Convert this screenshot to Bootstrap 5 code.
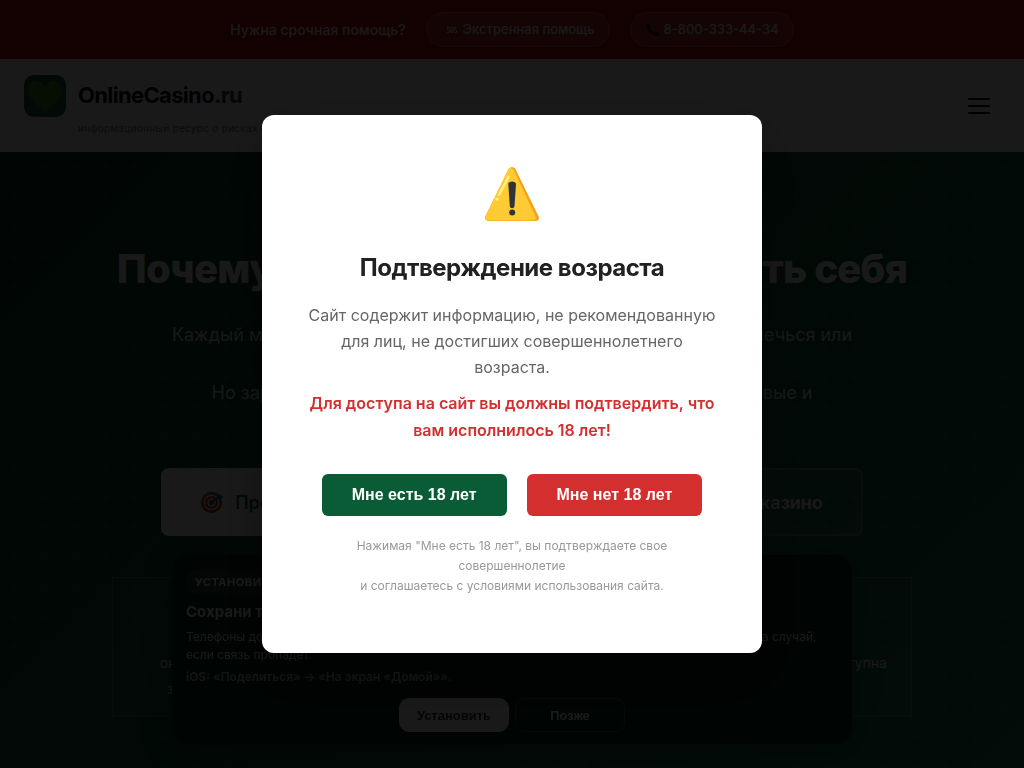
<!DOCTYPE html>
<html lang="ru">
<head>
<meta charset="utf-8">
<meta name="viewport" content="width=device-width, initial-scale=1">
<title>OnlineCasino.ru</title>
<link href="https://cdn.jsdelivr.net/npm/bootstrap@5.3.0/dist/css/bootstrap.min.css" rel="stylesheet">
<style>
body{font-family:Inter,"Noto Sans",sans-serif;color:#212121;background:#fff}
.sos-bar{background:#c00c0c;border-bottom:2px solid #b71c1c;padding:12px 16px 10px;gap:20px}
.sos-title{font-size:14px;line-height:20px;font-weight:500}
.sos-link{gap:4px;height:35px;padding:0 14px;border-radius:18px;font-size:13px;font-weight:500;color:#fff;background:rgba(255,255,255,.15);border:1px solid rgba(255,255,255,.2);text-decoration:none}
.site-head{padding:16px 24px;gap:12px;background:#fff}
.logo-box{width:42px;height:42px;border-radius:10px;background:linear-gradient(135deg,#0a5c36,#0d6b50)}
.brand-name{font-size:22px;line-height:40px;font-weight:700;letter-spacing:-.03em;color:#111}
.brand-name span{color:#0a5c46}
.brand-sub{font-size:10px;line-height:16px;padding-top:5px;letter-spacing:.03em;color:#777}
.burger{padding:10px;gap:5px;background:none;border:0}
.burger span{width:22px;height:2px;background:#000;border-radius:1px}
.hero{padding:92px 24px 0;min-height:0;color:#fff;background:url("data:image/svg+xml,%3Csvg xmlns='http://www.w3.org/2000/svg' width='30' height='30'%3E%3Cpath d='M15 11v8M11 15h8' stroke='white' stroke-opacity='.07'/%3E%3C/svg%3E"),linear-gradient(135deg,#0a4030,#0a5636 50%,#147a5c)}
.hero h1{font-size:40px;line-height:50px;font-weight:800;letter-spacing:-.02em;margin-bottom:26px}
.hero-lead{font-size:18px;line-height:29px;max-width:700px;margin-bottom:32px;opacity:.9}
.hero-btn{height:68px;padding:0 38px;border-radius:8px;border:2px solid #fff;font-size:18px;font-weight:600;text-decoration:none;white-space:nowrap}
.hero-main{background:#fff;color:#0a5c46;gap:12px}
.hero-alt{background:rgba(255,255,255,.1);border-color:rgba(255,255,255,.2);color:#fff}
.facts{max-width:800px;min-height:140px;margin-top:41px;padding:14px 24px;border:1px solid rgba(255,255,255,.2);background:rgba(255,255,255,.05);font-size:14px;line-height:26px}
.fact-last{padding-bottom:26px}
.install{bottom:24px;max-width:680px;width:calc(100% - 32px);padding:14px 14px 12px;border-radius:16px;background:#06281e;color:#fff;box-shadow:0 8px 30px rgba(0,0,0,.3);font-size:12px;line-height:18px}
.install-tag{padding:4px 9px;border-radius:13px;background:rgba(255,255,255,.1);font-size:11px;font-weight:700;letter-spacing:.05em}
.install h2{font-size:15px;line-height:20px;font-weight:700;margin:7px 0 6px}
.install-btn{width:110px;height:34px;border-radius:10px;font:bold 13px "Liberation Sans",sans-serif;border:1px solid #fff}
.install-yes{background:#fff;color:#0a3d2e}
.install-no{background:none;color:#fff;border-color:rgba(255,255,255,.25)}
.veil{background:rgba(0,0,0,.9);z-index:1050}
.age-box{max-width:500px;padding:40px;border-radius:12px;background:#fff;box-shadow:0 20px 60px rgba(0,0,0,.3)}
.age-icon{height:80px;margin-bottom:18px}
.age-box h2{font-size:24px;line-height:30px;font-weight:700;letter-spacing:-.02em;margin-bottom:19px}
.age-text{font-size:16px;line-height:26px;color:#666;margin-bottom:10px}
.age-strong{font-size:16px;line-height:27px;font-weight:600;color:#d32f2f;margin-bottom:30px}
.age-btn{height:42px;padding:0 30px;border:0;border-radius:6px;color:#fff;font:bold 16px "Liberation Sans",sans-serif}
.age-yes{background:#0a5c36}
.age-no{background:#d32f2f}
.age-note{font-size:12px;line-height:20px;color:#999;margin:20px 0 17px}
.gap-btn{gap:20px}
.gap-small{gap:6px}
</style>
</head>
<body class="vh-100 overflow-hidden d-flex flex-column">
<div class="sos-bar d-flex justify-content-center align-items-center text-white">
  <span class="sos-title">Нужна срочная помощь?</span>
  <a href="#sos" class="sos-link d-flex align-items-center">
    <svg class="ms-1" width="14" height="14" viewBox="0 0 16 16"><rect x="1" y="1" width="14" height="14" rx="2" fill="#d32020"/><g fill="none" stroke="#fff" stroke-width="1.3"><path d="M5.300 5.500C4.500 4.500 2.700 4.800 2.700 6.200C2.700 8 5.300 7.600 5.300 9.700C5.300 11.300 3.300 11.500 2.400 10.400"/><rect x="6.700" y="4.900" width="2.600" height="6.200" rx="1.300"/><path d="M13.300 5.500C12.500 4.500 10.700 4.800 10.700 6.200C10.700 8 13.300 7.600 13.300 9.700C13.300 11.300 11.300 11.500 10.400 10.400"/></g></svg>
    Экстренная помощь</a>
  <a href="tel:88003334434" class="sos-link d-flex align-items-center">
    <svg width="15" height="15" viewBox="0 0 16 16"><path fill="#111b1e" d="M1.500 3C1 1.500 3 0 4.200 1.200L6 4C6.500 5 5.700 5.700 4.900 6.400C5.700 8.500 7.500 10.300 9.600 11.200C10.400 10.200 11.200 9.700 12.200 10.300L14.800 12.100C16 13.200 14.500 15.200 13 15C7 14.500 1.800 9 1.500 3Z"/></svg>
    8-800-333-44-34</a>
</div>

<header class="site-head d-flex align-items-start">
  <div class="logo-box d-flex align-items-center justify-content-center">
    <svg width="36" height="36" viewBox="0 0 36 36"><path fill="#408018" d="M18 35C14 29 1 22 1 11C1 1 14 0 18 8C22 0 35 1 35 11C35 22 22 29 18 35Z"/><path fill="#60992c" d="M4 10C4 5 8 4 10 5C8 6 6 9 5 11ZM22 7C24 4 27 4 28 5C25 6 24 8 22 9Z"/></svg>
  </div>
  <div class="flex-grow-1">
    <div class="brand-name">OnlineCasino<span>.ru</span></div>
    <div class="brand-sub">информационный ресурс о рисках и зависимости</div>
  </div>
  <button class="burger d-flex flex-column align-self-center" aria-label="Меню"><span></span><span></span><span></span></button>
</header>

<main class="hero text-center flex-grow-1 overflow-hidden">
  <h1>Почему нужно вовремя защищать себя</h1>
  <p class="hero-lead mx-auto">Каждый может неожиданно столкнуться с азартными играми, увлечься или<br>потерять контроль над собой.<br>Но заранее зная все эти риски, можно сберечь свои силы, новые и<br>старые мечты.</p>
  <div class="d-flex justify-content-center gap-3">
    <a href="#test" class="hero-btn hero-main d-flex align-items-center">
      <svg width="22" height="22" viewBox="0 0 22 22"><circle cx="10.500" cy="11.500" r="10.500" fill="#c62828"/><circle cx="10.500" cy="11.500" r="8" fill="#eee"/><circle cx="10.500" cy="11.500" r="6.500" fill="#c62828"/><circle cx="10.500" cy="11.500" r="4.300" fill="#eee"/><circle cx="10.500" cy="11.500" r="2.700" fill="#c62828"/><path stroke="#1565a0" stroke-width="1.800" d="M11 11L18 6"/><path fill="#1976d2" d="M15 7L17 3L20 4L22 6L19 9Z"/></svg>
      Пройти тест на риски</a>
    <a href="#about" class="hero-btn hero-alt d-flex align-items-center">Узнать правду об онлайн-казино</a>
  </div>
  <div class="facts mx-auto d-flex align-items-end">
    <div class="col-4">онлайн-игры и слот-машинки<br>затягивают с первых минут</div>
    <div class="col-4">Поддержка<br>рядом</div>
    <div class="col-4 text-end fact-last">Помощь доступна</div>
  </div>
</main>

<section class="install position-fixed start-50 translate-middle-x">
  <div class="d-flex"><span class="install-tag">УСТАНОВИТЬ САЙТ</span></div>
  <h2>Сохрани телефоны помощи</h2>
  <p class="mb-1">Телефоны доверия и экстренной помощи будут всегда под рукой. Добавьте этот сайт на экран на случай, если связь пропадет.</p>
  <p class="fw-semibold opacity-75 mb-0">iOS: «Поделиться» → «На экран «Домой»».</p>
  <div class="gap-small d-flex justify-content-center mt-2 pt-1">
    <button class="install-btn install-yes">Установить</button>
    <button class="install-btn install-no">Позже</button>
  </div>
</section>

<div class="veil position-fixed top-0 start-0 w-100 h-100 d-flex align-items-center justify-content-center">
  <div class="age-box w-100 text-center" role="dialog" aria-modal="true" aria-labelledby="age-title">
    <div class="age-icon d-flex align-items-center justify-content-center">
      <svg width="56" height="56" viewBox="0 0 56 56"><path fill="#f2a31b" d="M24.500 2.200C26 -.3 30 -.3 31.500 2.200L54.400 49C56 52 54 54 51.500 54H4.500C1.800 54 0 51.500 1.500 49Z"/><path fill="#ffca34" d="M24.200 2.200C25.500 -.2 28.500 .6 29.600 2.800L51.500 49.500C52.600 52 51 53.500 49.500 53.500H4.500C2 53.500 .5 51.500 1.700 49Z"/><path fill="#fff17c" d="M23.500 9C25 8 26 9 25.300 11L16.500 28C15.500 30 13 29 14 27Z"/><ellipse cx="13" cy="32" rx="1.900" ry="1.500" fill="#fff17c"/><path fill="#303438" d="M24.300 17C24.300 13.500 32 13.500 32 17L30.500 39C30.300 42 26 42 25.800 39Z"/><circle cx="28.200" cy="45.500" r="3" fill="#303438"/></svg>
    </div>
    <h2 id="age-title">Подтверждение возраста</h2>
    <p class="age-text">Сайт содержит информацию, не рекомендованную для лиц, не достигших совершеннолетнего возраста.</p>
    <p class="age-strong">Для доступа на сайт вы должны подтвердить, что вам исполнилось 18 лет!</p>
    <div class="gap-btn d-flex justify-content-center">
      <button class="age-btn age-yes">Мне есть 18 лет</button>
      <button class="age-btn age-no">Мне нет 18 лет</button>
    </div>
    <p class="age-note px-2">Нажимая "Мне есть 18 лет", вы подтверждаете свое совершеннолетие<br>и соглашаетесь с условиями использования сайта.</p>
  </div>
</div>
<script src="https://cdn.jsdelivr.net/npm/bootstrap@5.3.0/dist/js/bootstrap.bundle.min.js"></script>
</body>
</html>
